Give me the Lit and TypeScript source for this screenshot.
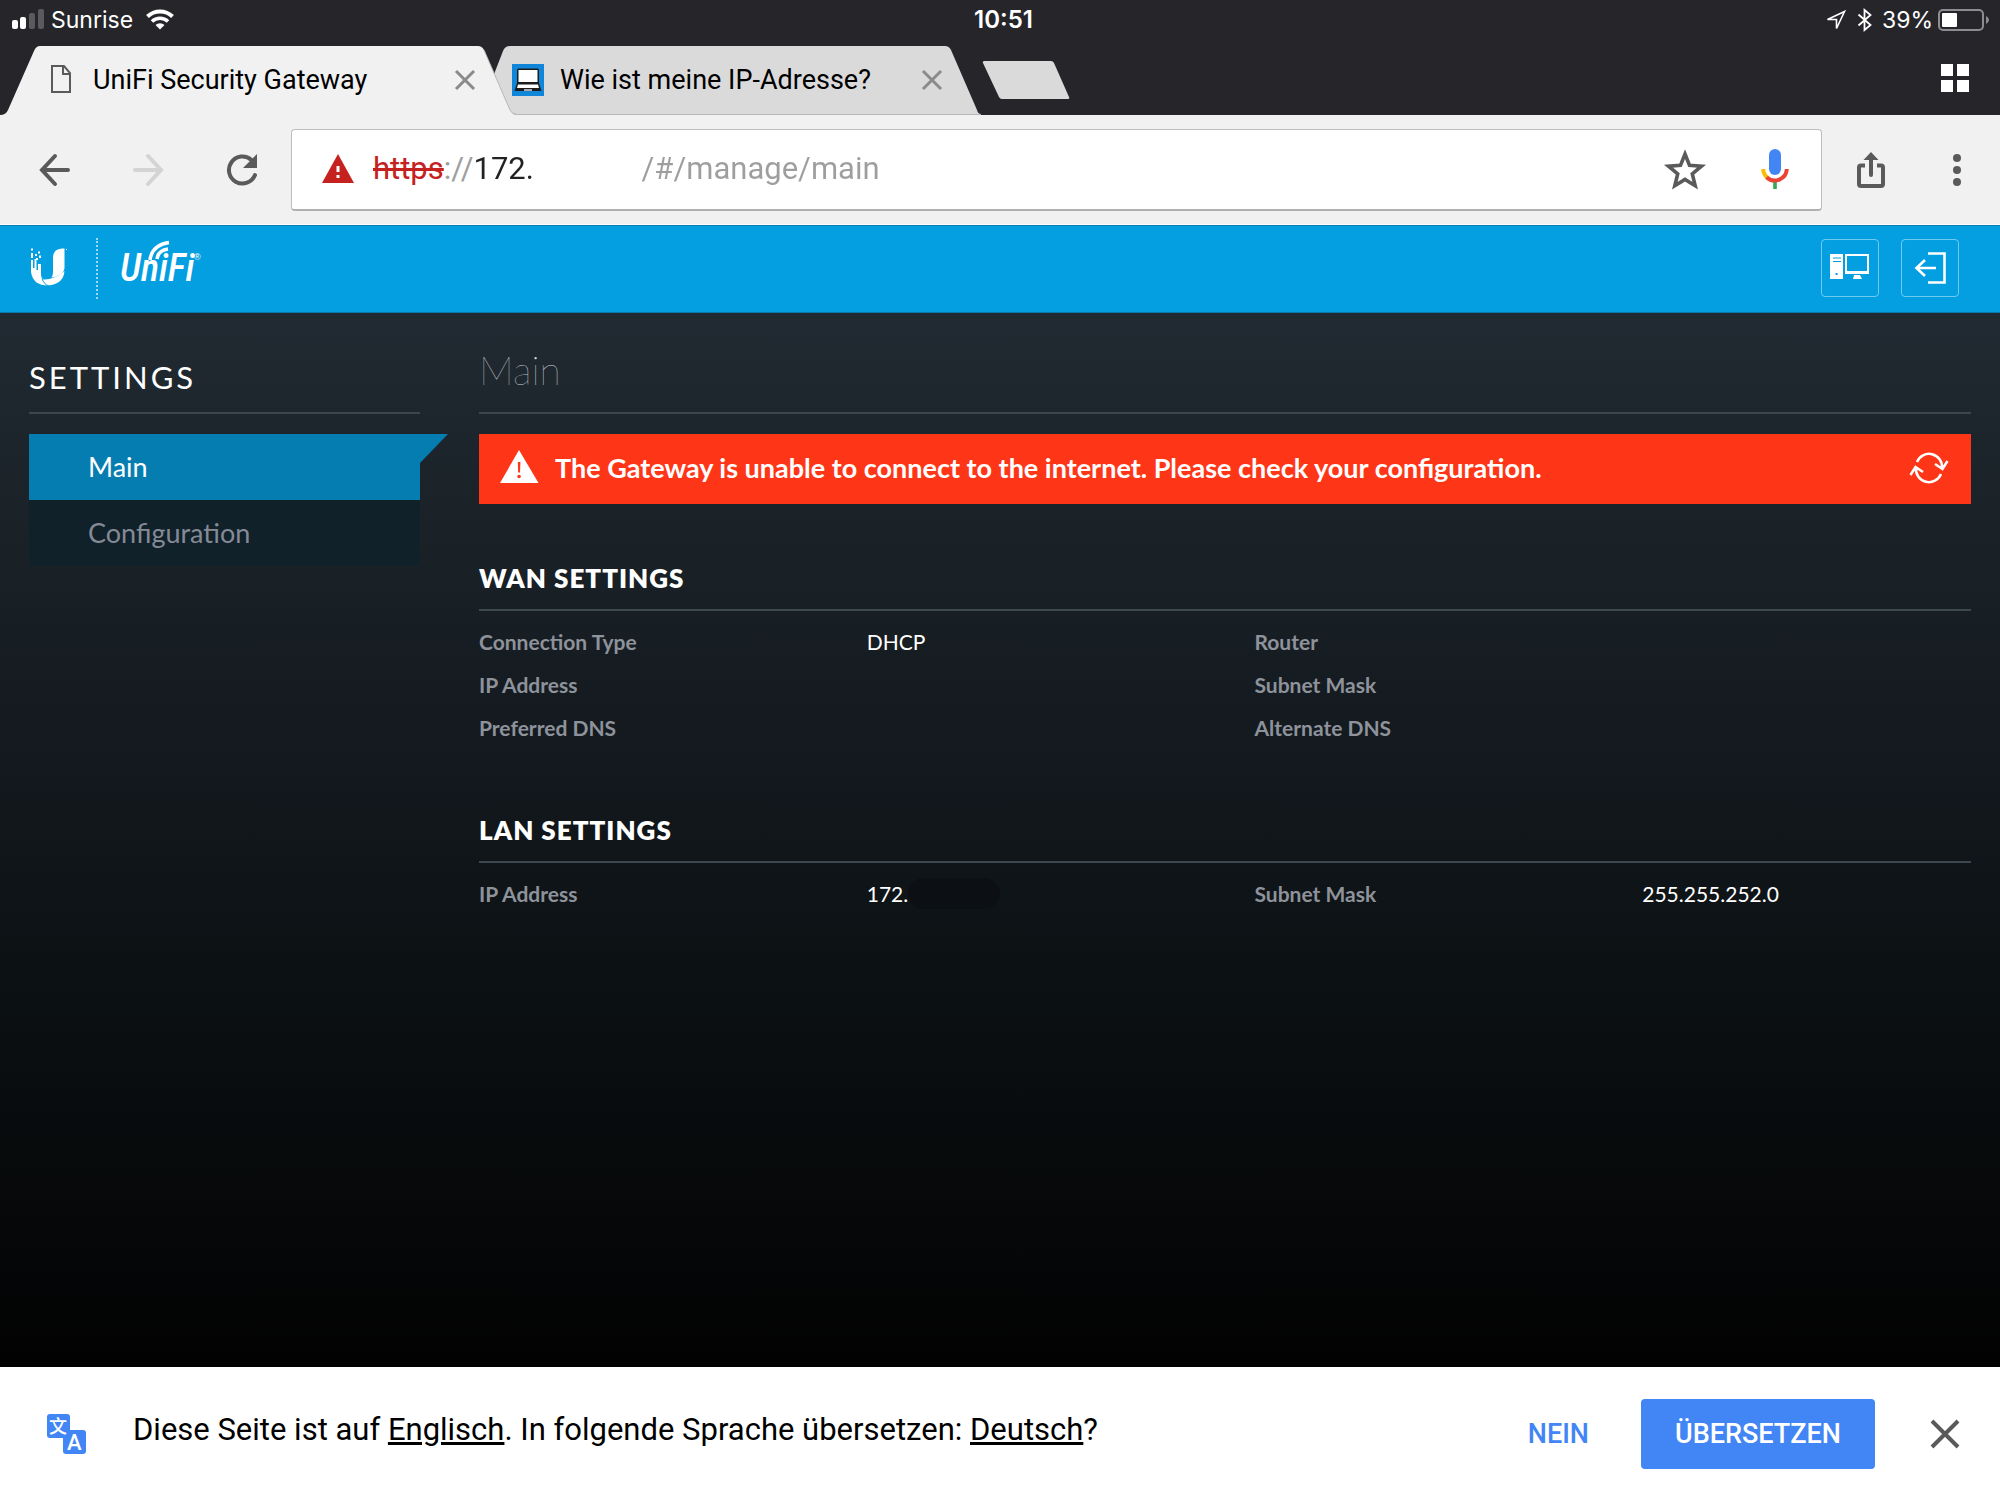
import { LitElement, html, css, nothing } from "lit";
import { customElement, property } from "lit/decorators.js";

type Field = { label: string; value?: string; masked?: boolean };

const WAN: Field[] = [
  { label: "Connection Type", value: "DHCP" },
  { label: "Router" },
  { label: "IP Address" },
  { label: "Subnet Mask" },
  { label: "Preferred DNS" },
  { label: "Alternate DNS" },
];

const LAN: Field[] = [
  { label: "IP Address", value: "172.", masked: true },
  { label: "Subnet Mask", value: "255.255.252.0" },
];

const reset = css`
  * {
    box-sizing: border-box;
  }
  svg {
    display: block;
    flex: none;
    overflow: visible;
  }
  button {
    display: flex;
    align-items: center;
    justify-content: center;
    margin: 0;
    padding: 0;
    border: 0;
    background: none;
    color: inherit;
    font: inherit;
    cursor: pointer;
  }
  a {
    color: inherit;
  }
`;

@customElement("status-bar")
export class StatusBar extends LitElement {
  static styles = [
    reset,
    css`
      :host {
        display: grid;
        grid-template-columns: 1fr auto 1fr;
        align-items: center;
        height: 46px;
        padding: 0 11px 6px 12px;
        background: #26252a;
        color: #fff;
        font: 400 23px/28px Inter, Roboto, sans-serif;
      }
      .side {
        display: flex;
        align-items: center;
        gap: 7px;
      }
      .end {
        justify-content: flex-end;
        gap: 5px;
      }
      .clock {
        padding-left: 6px;
        font-size: 24px;
        font-weight: 600;
      }
      .wifi {
        margin-left: 6px;
      }
    `,
  ];
  render() {
    return html`
      <div class="side">
        <svg width="32" height="22" viewBox="0 0 32 22" fill="#fff">
          <rect x="0" y="11" width="6" height="9" rx="2" />
          <rect x="8" y="8" width="6" height="12" rx="2" />
          <rect x="17" y="4" width="6" height="16" rx="2" fill="#5b5a5e" />
          <rect x="26" y="0" width="6" height="20" rx="2" fill="#5b5a5e" />
        </svg>
        <span>Sunrise</span>
        <svg class="wifi" width="28" height="22" viewBox="0 0 28 22" fill="none" stroke="#fff">
          <path d="M1.500 7.500a18 18 0 0 1 25 0" stroke-width="4" />
          <path d="M6 12.500a11.500 11.500 0 0 1 16 0" stroke-width="3.600" />
          <path d="M14 20.500l-4.500-4.500a6.500 6.500 0 0 1 9 0z" fill="#fff" stroke="none" />
        </svg>
      </div>
      <span class="clock">10:51</span>
      <div class="side end">
        <svg width="20" height="20" viewBox="0 0 20 20" fill="none" stroke="#fff" stroke-width="1.600">
          <path d="M18.500 1.500L1.500 9.500h9v9z" stroke-linejoin="miter" />
        </svg>
        <svg width="26" height="24" viewBox="0 0 26 24" fill="none" stroke="#fff" stroke-width="1.800">
          <path d="M7.500 6.500L19.500 17l-6 5V2l6 5L7.500 17.500" />
        </svg>
        <span>39%</span>
        <svg width="51" height="22" viewBox="0 0 51 22">
          <rect x="1" y="1" width="44" height="20" rx="4" fill="none" stroke="#8d8c90" stroke-width="2" />
          <rect x="4" y="4" width="15" height="14" rx="1" fill="#fff" />
          <path d="M48 7q3 1.500 3 4t-3 4z" fill="#8d8c90" />
        </svg>
      </div>
    `;
  }
}

@customElement("tab-strip")
export class TabStrip extends LitElement {
  static styles = [
    reset,
    css`
      :host {
        display: flex;
        align-items: stretch;
        height: 69px;
        padding: 0 30px 0 4px;
        background: #26252a;
        color: #000;
        font: 400 27px/32px Roboto, sans-serif;
      }
      .tabs {
        display: flex;
        flex: 1;
      }
      .tab {
        position: relative;
        display: flex;
        align-items: center;
        width: 510px;
        padding: 0 37px 2px 46px;
      }
      .tab + .tab {
        width: 490px;
        margin-left: -23px;
        padding-left: 21px;
      }
      .active {
        z-index: 1;
      }
      .shape {
        position: absolute;
        inset: 0;
        width: 100%;
        height: 100%;
      }
      .title {
        position: relative;
        flex: 1;
        justify-content: flex-start;
        gap: 16px;
        white-space: nowrap;
      }
      .active .title {
        gap: 21px;
      }
      .close {
        position: relative;
        width: 24px;
        height: 24px;
      }
      .new {
        align-self: center;
        height: 40px;
      }
      .all {
        padding-bottom: 6px;
      }
    `,
  ];
  private close() {
    return html`<button class="close" aria-label="Tab schließen">
      <svg width="20" height="20" viewBox="0 0 20 20" stroke="#8a8a8a" stroke-width="3">
        <path d="M1 1l18 18M19 1L1 19" />
      </svg>
    </button>`;
  }
  render() {
    return html`
      <div class="tabs">
        <div class="tab active">
          <svg class="shape" viewBox="0 0 510 69" preserveAspectRatio="none">
            <path d="M-4 69Q2 69 4 64L30 5Q32 0 36 0H474Q478 0 480 4L506 64Q508 69 512 69z" fill="#f1f1f1" />
            <path d="M480 4L506 64Q508 68 512 68" fill="none" stroke="#b8b8b8" />
          </svg>
          <button class="title">
            <svg width="22" height="30" viewBox="0 0 22 30" fill="none" stroke="#5a5a5a" stroke-width="2">
              <path d="M2 1h12l6 7v19H2zM13 1v8h7" />
            </svg>
            UniFi Security Gateway
          </button>
          ${this.close()}
        </div>
        <div class="tab">
          <svg class="shape" viewBox="0 0 490 69" preserveAspectRatio="none">
            <path d="M0 69V36L12 5Q14 0 19 0H454Q458 0 460 4L486 64Q487 68 490 68V69z" fill="#dadada" />
            <path d="M20 68.500H490" stroke="#b8b8b8" />
          </svg>
          <button class="title">
            <svg width="32" height="32" viewBox="0 0 32 32">
              <rect width="32" height="32" fill="#0f86d9" />
              <path d="M5 19V6q0-1.500 1.500-1.500h19Q27 4.500 27 6v13l2.500 8H2.500z" fill="#1c1c1c" />
              <path d="M6.500 6h19v12h-19zM6 20.500h20l1 3.500H5z" fill="#fff" />
              <path d="M12 25h8v2h-8z" fill="#aaa" />
            </svg>
            Wie ist meine IP-Adresse?
          </button>
          ${this.close()}
        </div>
        <button class="new" aria-label="Neuer Tab">
          <svg width="90" height="40" viewBox="0 0 90 40">
            <path d="M4 0H70q2 0 3 2L88 36q1 2-1 2H21q-2 0-3-2L2 2Q1 0 4 0z" fill="#dadada" />
          </svg>
        </button>
      </div>
      <button class="all" aria-label="Alle Tabs">
        <svg width="30" height="30" viewBox="0 0 30 30" fill="#fff">
          <path d="M1 1h12v12H1zM17 1h12v12H17zM1 17h12v12H1zM17 17h12v12H17z" />
        </svg>
      </button>
    `;
  }
}

@customElement("browser-toolbar")
export class BrowserToolbar extends LitElement {
  static styles = [
    reset,
    css`
      :host {
        display: flex;
        align-items: center;
        height: 110px;
        padding: 0 19px 0 30px;
        background: #f1f1f1;
        border-bottom: 1px solid #fff;
        font: 400 31px/36px Roboto, sans-serif;
      }
      .nav {
        display: flex;
        gap: 46px;
        padding-right: 25px;
      }
      .nav button,
      .tools button {
        width: 48px;
        height: 48px;
      }
      .box {
        display: flex;
        flex: 1;
        align-items: center;
        min-width: 0;
        height: 82px;
        padding: 0 22px 0 30px;
        background: #fff;
        border: 1px solid #bdbdbd;
        border-bottom: 2px solid #b0b0b0;
        border-radius: 4px;
      }
      .scheme {
        margin-left: 19px;
        color: #c5221f;
        text-decoration: line-through;
      }
      .sep {
        color: #9e9e9e;
      }
      .url {
        flex: 1;
        min-width: 0;
        margin: 0;
        padding: 0;
        border: 0;
        outline: 0;
        font: inherit;
        white-space: pre;
        color: transparent;
        caret-color: #222;
        background: linear-gradient(90deg, #222 80px, #9e9e9e 80px);
        -webkit-background-clip: text;
        background-clip: text;
      }
      .inside {
        display: flex;
        gap: 42px;
      }
      .inside button {
        width: 48px;
        height: 48px;
      }
      .tools {
        display: flex;
        gap: 38px;
        padding-left: 25px;
      }
    `,
  ];
  render() {
    return html`
      <div class="nav">
        <button aria-label="Zurück">
          <svg width="32" height="32" viewBox="0 0 32 32" fill="none" stroke="#5a5a5a" stroke-width="4" stroke-linecap="round">
            <path d="M30 16H4M17 2L4 16l13 14" />
          </svg>
        </button>
        <button aria-label="Vorwärts" disabled>
          <svg width="32" height="32" viewBox="0 0 32 32" fill="none" stroke="#d4d4d4" stroke-width="4" stroke-linecap="round">
            <path d="M3 16h26M16 2l13 14-13 14" />
          </svg>
        </button>
        <button aria-label="Neu laden">
          <svg width="32" height="32" viewBox="0 0 32 32">
            <path d="M25.500 6A13.500 13.500 0 1 0 29 21" fill="none" stroke="#5a5a5a" stroke-width="4" stroke-linecap="round" />
            <path d="M31 0v14H17z" fill="#5a5a5a" />
          </svg>
        </button>
      </div>
      <label class="box">
        <svg width="32" height="30" viewBox="0 0 32 30">
          <path d="M16 0l16 29H0z" fill="#c5221f" />
          <path d="M14.500 12h3v6h-3zM14.500 21h3v3h-3z" fill="#fff" />
        </svg>
        <span class="scheme">https</span><span class="sep">://</span>
        <input class="url" aria-label="Adresse" spellcheck="false" .value=${"172." + " ".repeat(14) + "/#/manage/main"} />
        <span class="inside">
          <button aria-label="Lesezeichen">
            <svg width="40" height="40" viewBox="0 0 40 40">
              <path
                d="M20 5l4.500 11.300 12 .9-9.200 7.700 2.900 11.800L20 30.400 9.800 36.700l2.900-11.800-9.200-7.700 12-.9z"
                fill="none" stroke="#5a5a5a" stroke-width="3.600" />
            </svg>
          </button>
          <button aria-label="Sprachsuche">
            <svg width="28" height="40" viewBox="0 0 28 40" fill="none">
              <rect x="8" y="0" width="12" height="26" rx="6" fill="#4285f4" />
              <path d="M12.200 33h3.600v7h-3.600z" fill="#34a853" />
              <path d="M2.200 20q0 5 4 8.600" stroke="#fbbc05" stroke-width="4" />
              <path d="M5.600 28.200A12 12 0 0 0 25.800 20" stroke="#ea4335" stroke-width="4" />
            </svg>
          </button>
        </span>
      </label>
      <div class="tools">
        <button aria-label="Teilen">
          <svg width="28" height="36" viewBox="0 0 28 36">
            <path d="M8 13.500H4q-2 0-2 2V32q0 2 2 2h20q2 0 2-2V15.500q0-2-2-2h-4" fill="none" stroke="#5a5a5a" stroke-width="4" />
            <path d="M14 0l7.500 8h-5.500v15q0 2-2 2t-2-2V8H6.500z" fill="#5a5a5a" />
          </svg>
        </button>
        <button aria-label="Menü">
          <svg width="10" height="32" viewBox="0 0 10 32" fill="#5a5a5a">
            <circle cx="5" cy="4" r="4" />
            <circle cx="5" cy="16" r="4" />
            <circle cx="5" cy="28" r="4" />
          </svg>
        </button>
      </div>
    `;
  }
}

@customElement("unifi-header")
export class UnifiHeader extends LitElement {
  static styles = [
    reset,
    css`
      :host {
        display: flex;
        align-items: center;
        justify-content: space-between;
        height: 88px;
        padding: 0 41px 2px 29px;
        background: #039fe1;
        border-top: 1px solid #0a7fb4;
        border-bottom: 1px solid #067aad;
      }
      .brand,
      .actions {
        display: flex;
        align-items: center;
      }
      .divider {
        height: 61px;
        margin: 0 22px 0 29px;
        border-left: 2px dotted #9adbf7;
      }
      .word {
        font: italic 500 38px "Roboto Condensed", "Liberation Sans Narrow", "Liberation Sans", sans-serif;
      }
      .mark {
        font: 400 9px "Liberation Sans", sans-serif;
      }
      .actions {
        gap: 22px;
      }
      .actions button {
        width: 58px;
        height: 58px;
        border: 1px solid #6fcaf0;
        border-radius: 4px;
      }
    `,
  ];
  render() {
    return html`
      <div class="brand">
        <svg width="38" height="42" viewBox="0 0 38 42" fill="#fff">
          <path d="M24 11Q24 2 33 1.500H35.500V21Q35 25 31 27.500 27 30 22.500 30.500 24 29 24 25z" />
          <path d="M2 13h2v8h1.500v-9h2v11H9v-6h3v10q0 4 2.500 5.500 10 .5 21-8.500-1 13-16.500 14.500Q4 38.500 2 25z" />
          <path d="M13 31.500q2 6 7 7.500" fill="none" stroke="#039fe1" stroke-width="1" />
          <path d="M2 1.500h2v2H2zM2 6h2v5H2zM6 7h2v2H6zM9 4.500h2v2H9zM7 11h2v2H7zM10 8.500h2v2.500h-2zM37 2h1v1h-1z" />
        </svg>
        <div class="divider"></div>
        <svg width="84" height="56" viewBox="0 0 84 56" fill="#fff">
          <text class="word" x="0" y="41">UniFi</text>
          <path d="M30 20Q32 5 49 2.500" fill="none" stroke="#fff" stroke-width="3.500" />
          <path d="M37 19Q38 10.500 48 9" fill="none" stroke="#fff" stroke-width="3.500" />
          <text class="mark" x="74" y="20">®</text>
        </svg>
      </div>
      <div class="actions">
        <button aria-label="Controller">
          <svg width="40" height="28" viewBox="0 0 40 28" fill="#fff">
            <path fill-rule="evenodd" d="M0 0h13v25H0zM3 3.500v1h8v-1zM3 7v1h8V7zM5.500 19v2h2v-2z" />
            <path fill-rule="evenodd" d="M15 0h24v20H15zM17 2v15h20V2zM24 21h6l2 4h-9z" />
          </svg>
        </button>
        <button aria-label="Abmelden">
          <svg width="32" height="32" viewBox="0 0 32 32" fill="none" stroke="#fff" stroke-width="2.600">
            <path d="M14 1.500h16.500v29H14M22 16H2M11 8L2.500 16l8.500 8" />
          </svg>
        </button>
      </div>
    `;
  }
}

@customElement("settings-group")
export class SettingsGroup extends LitElement {
  @property() heading = "";
  @property({ attribute: false }) fields: Field[] = [];
  static styles = [
    reset,
    css`
      :host {
        display: block;
      }
      h2 {
        margin: 0;
        padding-bottom: 13px;
        border-bottom: 2px solid #3d494f;
        color: #fff;
        font-weight: 800;
        font-size: 26px;
        line-height: 36px;
        letter-spacing: 1px;
      }
      dl {
        display: grid;
        grid-template-columns: repeat(4, 1fr);
        column-gap: 59px;
        margin: 0;
        padding-top: 9px;
        font-size: 21px;
        line-height: 43px;
      }
      .pair {
        display: contents;
      }
      dt {
        color: #8e929b;
        font-weight: 700;
      }
      dd {
        display: flex;
        align-items: center;
        margin: 0;
        color: #fff;
      }
      .mask {
        width: 92px;
        height: 31px;
        border-radius: 16px;
        background: #0c1014;
      }
    `,
  ];
  render() {
    return html`
      <h2>${this.heading}</h2>
      <dl>
        ${this.fields.map(
          (f) => html`<div class="pair">
            <dt>${f.label}</dt>
            <dd>${f.value}${f.masked ? html`<span class="mask"></span>` : nothing}</dd>
          </div>`
        )}
      </dl>
    `;
  }
}

@customElement("translate-bar")
export class TranslateBar extends LitElement {
  static styles = [
    reset,
    css`
      :host {
        display: flex;
        align-items: center;
        height: 133px;
        padding: 0 31px 0 46px;
        background: #fff;
        color: #000;
        font: 400 31px/36px Roboto, sans-serif;
      }
      p {
        flex: 1;
        margin: 0;
        padding: 0 0 8px 46px;
      }
      .glyph {
        font: 500 18px "Noto Sans CJK SC", Roboto, sans-serif;
      }
      .latin {
        font: 500 22px Roboto, sans-serif;
      }
      .no,
      .yes {
        height: 70px;
        font-size: 27px;
        font-weight: 500;
      }
      .no {
        padding: 0 26px;
        color: #4285f4;
      }
      .yes {
        margin: 0 46px 0 26px;
        padding: 0 34px;
        border-radius: 4px;
        background: #4285f4;
        color: #fff;
      }
      .close {
        width: 48px;
        height: 48px;
      }
    `,
  ];
  render() {
    return html`
      <svg width="41" height="40" viewBox="0 0 41 40">
        <rect x="1" y="0" width="23" height="24" rx="3" fill="#4285f4" />
        <rect x="17" y="16" width="23" height="24" rx="3" fill="#4285f4" />
        <text class="glyph" x="3" y="19" fill="#fff">文</text>
        <text class="latin" x="21" y="36" fill="#fff">A</text>
      </svg>
      <p>Diese Seite ist auf <a href="#quelle">Englisch</a>. In folgende Sprache übersetzen: <a href="#ziel">Deutsch</a>?</p>
      <button class="no">NEIN</button>
      <button class="yes">ÜBERSETZEN</button>
      <button class="close" aria-label="Schließen">
        <svg width="28" height="28" viewBox="0 0 28 28" stroke="#5a5a5a" stroke-width="4">
          <path d="M1 1l26 26M27 1L1 27" />
        </svg>
      </button>
    `;
  }
}

@customElement("app-root")
export class AppRoot extends LitElement {
  static styles = [
    reset,
    css`
      :host {
        display: flex;
        flex-direction: column;
        min-height: 100vh;
        font-family: Lato, sans-serif;
      }
      .page {
        display: grid;
        grid-template-columns: 391px 1fr;
        column-gap: 59px;
        align-items: start;
        flex: 1;
        padding: 0 29px 40px;
        background: linear-gradient(#212a32, #0d1215 60%, #020202);
      }
      h1,
      .side-title {
        height: 101px;
        margin: 0 0 20px;
        border-bottom: 2px solid #3d464c;
      }
      .side-title {
        padding-top: 44px;
        color: #fff;
        font-size: 31px;
        font-weight: 400;
        line-height: 40px;
        letter-spacing: 3px;
      }
      h1 {
        padding-top: 34px;
        color: #d5d9dc;
        font-size: 39px;
        font-weight: 100;
        line-height: 46px;
      }
      .item {
        display: block;
        padding: 0 59px;
        background: #10212a;
        color: #858a97;
        font-size: 27px;
        line-height: 66px;
        text-decoration: none;
      }
      .current {
        position: relative;
        background: #067db1;
        color: #fff;
      }
      .current::after {
        content: "";
        position: absolute;
        left: 100%;
        top: 0;
        width: 28px;
        height: 29px;
        background: #067db1;
        clip-path: polygon(0 0, 100% 0, 0 100%);
      }
      .alert {
        display: flex;
        align-items: center;
        gap: 16px;
        height: 70px;
        margin-bottom: 56px;
        padding: 0 22px 2px 20px;
        background: #ff3517;
        color: #fff;
        font-size: 27px;
        font-weight: 700;
        line-height: 36px;
      }
      .message {
        flex: 1;
      }
      settings-group {
        margin-bottom: 63px;
      }
    `,
  ];
  render() {
    return html`
      <status-bar></status-bar>
      <tab-strip></tab-strip>
      <browser-toolbar></browser-toolbar>
      <unifi-header></unifi-header>
      <div class="page">
        <nav>
          <h2 class="side-title">SETTINGS</h2>
          <a class="item current" href="#main">Main</a>
          <a class="item" href="#configuration">Configuration</a>
        </nav>
        <main>
          <h1>Main</h1>
          <div class="alert" role="alert">
            <svg width="40" height="36" viewBox="0 0 40 36">
              <path d="M20 0l19.500 33H1z" fill="#fff" />
              <path d="M18.800 12h2.600l-.4 10.500h-1.800z" fill="#ff3517" />
              <circle cx="20.100" cy="26.500" r="1.800" fill="#ff3517" />
            </svg>
            <span class="message">The Gateway is unable to connect to the internet. Please check your configuration.</span>
            <button aria-label="Refresh">
              <svg width="40" height="32" viewBox="0 0 40 32" fill="none" stroke="#fff" stroke-width="2.500">
                <path d="M8 10A13 13 0 0 1 33 16M26 12l7.500 5L38.500 9" />
                <path d="M32 22A13 13 0 0 1 7 16M14 20L6.500 15 1.500 23" />
              </svg>
            </button>
          </div>
          <settings-group heading="WAN SETTINGS" .fields=${WAN}></settings-group>
          <settings-group heading="LAN SETTINGS" .fields=${LAN}></settings-group>
        </main>
      </div>
      <translate-bar></translate-bar>
    `;
  }
}
